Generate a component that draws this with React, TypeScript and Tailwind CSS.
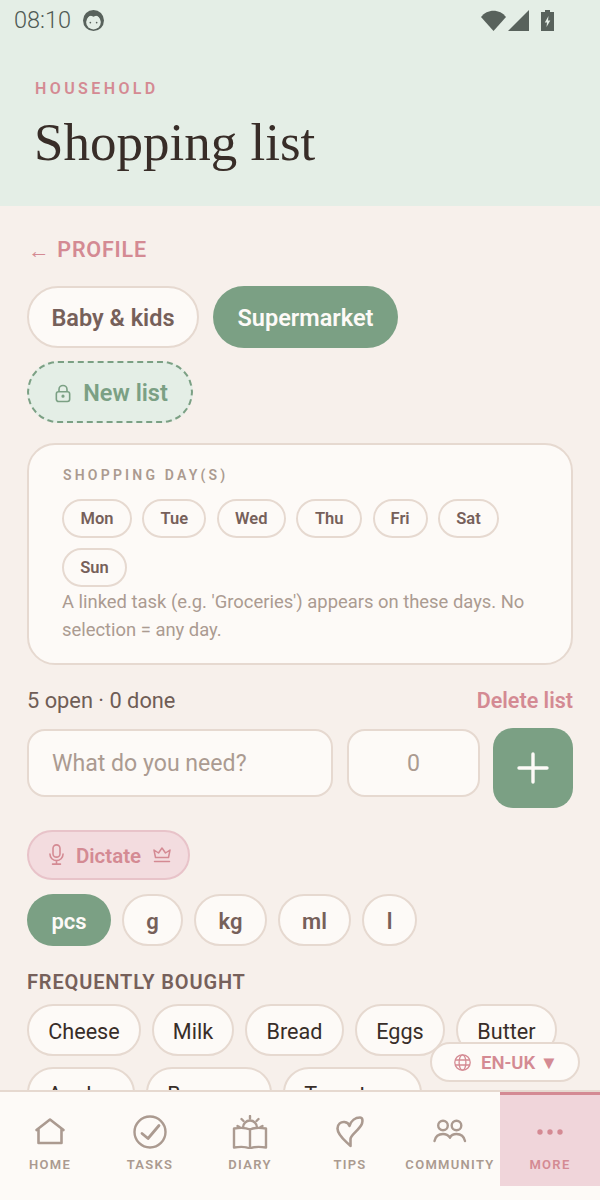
const days = [
  { label: "Mon", w: "w-[70px]" },
  { label: "Tue", w: "w-[64px]" },
  { label: "Wed", w: "w-[69px]" },
  { label: "Thu", w: "w-[66px]" },
  { label: "Fri", w: "w-[55px]" },
  { label: "Sat", w: "w-[61px]" },
  { label: "Sun", w: "w-[65px]" },
];

const units = [
  { label: "g", w: "w-[61px]" },
  { label: "kg", w: "w-[73px]" },
  { label: "ml", w: "w-[73px]" },
  { label: "l", w: "w-[55px]" },
];

const frequent = [
  { label: "Cheese", w: "w-[114px]" },
  { label: "Milk", w: "w-[82px]" },
  { label: "Bread", w: "w-[99px]" },
  { label: "Eggs", w: "w-[90px]" },
  { label: "Butter", w: "w-[101px]" },
  { label: "Apples", w: "w-[108px]" },
  { label: "Bananas", w: "w-[126px]" },
  { label: "Tomatoes", w: "w-[139px]" },
];

const HomeIcon = () => (
  <svg width="34" height="34" viewBox="0 0 34 34" fill="none" stroke="#ab9a90" strokeWidth="2.6" strokeLinejoin="round" strokeLinecap="round">
    <path d="M3.500 15 17 4.500 30.500 15M5.500 14V28H28.500V14" />
  </svg>
);

const TasksIcon = () => (
  <svg width="34" height="34" viewBox="0 0 34 34" fill="none" stroke="#ab9a90" strokeWidth="2.4" strokeLinejoin="round" strokeLinecap="round">
    <circle cx="17" cy="17" r="15.500" />
    <path d="M9 18.500 15 23.500 26 10.500" strokeWidth="2.800" />
  </svg>
);

const DiaryIcon = () => (
  <svg width="36" height="34" viewBox="0 0 36 34" fill="none" stroke="#ab9a90" strokeWidth="2.400" strokeLinejoin="round" strokeLinecap="round">
    <path d="M18 14.500C14.500 12.800 8 12.500 2 13.500V32.500C8 31.500 14.500 31.800 18 33.500 21.500 31.800 28 31.500 34 32.500V13.500C28 12.500 21.500 12.800 18 14.500ZM18 14.500V33.500" />
    <path d="M11 12.500A7 7 0 0 1 25 12.500" />
    <path d="M18 1V3.500M9.500 4 11.500 6M26.500 4 24.500 6M5.500 11 7.500 12M30.500 11 28.500 12" />
  </svg>
);

const TipsIcon = () => (
  <svg width="30" height="34" viewBox="0 0 30 34" fill="none" stroke="#ab9a90" strokeWidth="2.600" strokeLinejoin="round" strokeLinecap="round">
    <path d="M15.500 31C12 27 2.500 21 2.500 13.500 2.500 9 6 6.500 9.500 7 11.800 7.300 13.800 8.500 14.500 11 16 5.500 20.500 2.500 25 2.500 27.500 2.500 28 5.500 27 8.500 24.500 15 15.500 20 15.500 24Z" />
  </svg>
);

const CommunityIcon = () => (
  <svg width="34" height="26" viewBox="0 0 34 26" fill="none" stroke="#ab9a90" strokeWidth="2.400" strokeLinecap="round">
    <circle cx="10" cy="6.500" r="4.800" />
    <circle cx="23.500" cy="6.500" r="4.800" />
    <path d="M1.500 22C2.500 17 6 15 10 15 13.500 15 15.500 16.500 17 18.500" />
    <path d="M17 18.500C18 16.500 20.500 15 23.500 15 27.500 15 31 17.500 32 22" />
  </svg>
);

const MoreIcon = () => (
  <svg width="28" height="8" viewBox="0 0 28 8" fill="#d48a93">
    <circle cx="4" cy="4" r="2.700" />
    <circle cx="14" cy="4" r="2.700" />
    <circle cx="24" cy="4" r="2.700" />
  </svg>
);

const navItems = [
  { label: "HOME", icon: <HomeIcon /> },
  { label: "TASKS", icon: <TasksIcon /> },
  { label: "DIARY", icon: <DiaryIcon /> },
  { label: "TIPS", icon: <TipsIcon /> },
  { label: "COMMUNITY", icon: <CommunityIcon /> },
];

export default function App() {
  return (
    <div className="relative flex h-[1200px] w-[600px] flex-col overflow-hidden bg-[#f7f0eb] font-['Roboto',sans-serif]">
      <header className="h-[206px] shrink-0 bg-[#e4eee6]">
        <div className="flex h-[41px] items-center justify-between pl-[14px] pr-[46px]">
          <div className="flex items-center gap-[12px]">
            <span className="text-[23.500px] font-light leading-none text-[#4f5a54]">08:10</span>
            <svg width="21" height="21" viewBox="0 0 20 20">
              <circle cx="10" cy="10" r="10" fill="#58625c" />
              <circle cx="10" cy="11.500" r="7" fill="#e4eee6" />
              <path d="M3 10C4 5 7 4.500 10 6.500 13 4.500 16 5 17 10V3H3Z" fill="#58625c" />
              <circle cx="7" cy="12" r=".8" fill="#58625c" />
              <circle cx="13" cy="12" r=".8" fill="#58625c" />
            </svg>
          </div>
          <div className="flex items-center gap-[12px]">
            <div className="flex items-center gap-[2px]">
              <svg width="25" height="21" viewBox="0 0 25 21">
                <path d="M0 7C6-1.500 19-1.500 25 7L12.500 21Z" fill="#58625c" />
              </svg>
              <svg width="21" height="21" viewBox="0 0 21 21">
                <path d="M21 0V21H0Z" fill="#58625c" />
              </svg>
            </div>
            <svg width="13" height="21" viewBox="0 0 13 21">
              <path d="M4 0H9V2H13V21H0V2H4Z" fill="#58625c" />
              <path d="M7.500 6 3.800 12.500H6L5.500 17 9.300 10.500H7Z" fill="#e4eee6" />
            </svg>
          </div>
        </div>
        <div className="pl-[35px] pt-[38px]">
          <p className="text-[16px] font-semibold leading-[20px] tracking-[3.400px] text-[#d48a93]">HOUSEHOLD</p>
          <h1 className="-ml-[1px] mt-[13px] font-['Liberation_Serif',serif] text-[53px] leading-[60px] text-[#382d28]">Shopping list</h1>
        </div>
      </header>

      <main className="flex min-h-0 flex-1 flex-col overflow-hidden px-[27px]">
        <div className="mt-[31px] flex h-[26px] items-center text-[21.500px] font-semibold leading-none tracking-[.8px] text-[#d48a93]">
          <span className="ml-[1px] mr-[7px] mt-[3px] font-normal">←</span>
          PROFILE
        </div>

        <div className="mt-[24px] flex flex-wrap gap-x-[14px] gap-y-[13px]">
          <button className="h-[62px] w-[172px] rounded-full border-2 border-[#e6d9d0] bg-[#fdfaf7] pt-[5px] text-[23.500px] font-semibold text-[#76605a]">Baby &amp; kids</button>
          <button className="h-[62px] w-[185px] rounded-full bg-[#7ba084] pt-[5px] text-[23.500px] font-semibold text-[#fdfaf7]">Supermarket</button>
          <button className="flex h-[62px] w-[166px] items-center justify-center gap-[12px] rounded-full border-2 border-dashed border-[#7ba084] bg-[#e4eee6] pl-[3px] pt-[4px] text-[23.500px] font-semibold text-[#7ba084]">
            <svg width="16" height="19" viewBox="0 0 18 20" fill="none" stroke="#7ba084" strokeWidth="1.800">
              <rect x="1.500" y="8" width="15" height="11" rx="2.500" />
              <path d="M4.500 8V5.500A4.500 4.500 0 0 1 13.500 5.500V8" />
              <circle cx="9" cy="13" r=".9" fill="#7ba084" />
            </svg>
            New list
          </button>
        </div>

        <section className="mt-[20px] h-[222px] shrink-0 rounded-[28px] border-2 border-[#e6d9d0] bg-[#fdfaf7] pl-[33px] pr-[28px] pt-[20px]">
          <p className="pl-[1px] text-[14px] font-semibold leading-[20px] tracking-[3.200px] text-[#ab9a90]">SHOPPING DAY(S)</p>
          <div className="mt-[14px] flex flex-wrap gap-x-[10.400px] gap-y-[10px]">
            {days.map((d) => (
              <span key={d.label} className={`flex h-[39px] items-center justify-center rounded-full border-2 border-[#e6d9d0] pt-[2px] text-[16.500px] font-semibold text-[#76605a] ${d.w}`}>
                {d.label}
              </span>
            ))}
          </div>
          <p className="mt-[1px] text-[18.400px] leading-[28px] text-[#ab9b91]">A linked task (e.g. 'Groceries') appears on these days. No selection = any day.</p>
        </section>

        <div className="mt-[22px] flex h-[30px] items-center justify-between">
          <span className="text-[21.800px] text-[#6f5d56]">5 open · 0 done</span>
          <span className="text-[21.500px] font-semibold text-[#d48a93]">Delete list</span>
        </div>

        <div className="mt-[11px] flex items-start">
          <div className="mt-[1px] flex h-[68px] w-[306px] items-center rounded-[18px] border-2 border-[#e6d9d0] bg-[#fdfaf7] pl-[23px] pt-[3px] text-[23.100px] text-[#ab9b91]">What do you need?</div>
          <div className="ml-[14px] mt-[1px] flex h-[68px] w-[133px] items-center justify-center rounded-[18px] border-2 border-[#e6d9d0] bg-[#fdfaf7] pt-[3px] text-[23.100px] text-[#ab9b91]">0</div>
          <button className="ml-[13px] flex h-[80px] w-[80px] items-center justify-center rounded-[20px] bg-[#7ba084]">
            <svg width="32" height="32" viewBox="0 0 32 32" stroke="#fdfaf7" strokeWidth="3.400" strokeLinecap="round">
              <path d="M16 2V30M2 16H30" />
            </svg>
          </button>
        </div>

        <button className="mt-[22px] flex h-[50px] w-[163px] shrink-0 items-center justify-center gap-[12px] rounded-full border-2 border-[#e8c3c9] bg-[#f3dcdf] pl-[3px] text-[20.500px] font-semibold text-[#d48a93]">
          <svg width="15" height="21" viewBox="0 0 17 24" fill="none" stroke="#d48a93" strokeWidth="1.800" strokeLinecap="round">
            <rect x="4.500" y="1" width="8" height="14" rx="4" />
            <path d="M1 11.500A7.500 7.500 0 0 0 16 11.500M8.500 19V23M4 23H13" />
          </svg>
          <span className="pt-[3px]">Dictate</span>
          <svg width="18" height="16" viewBox="0 0 18 16" fill="none" stroke="#d48a93" strokeWidth="1.500" strokeLinejoin="round" strokeLinecap="round">
            <path d="M2.500 10.500 1 3 5.500 6 9 1 12.500 6 17 3 15.500 10.500ZM1.500 14.500H16.500" />
          </svg>
        </button>

        <div className="mt-[14px] flex gap-x-[11px]">
          <span className="flex h-[52px] w-[84px] items-center justify-center rounded-full bg-[#7ba084] pt-[4px] text-[22px] font-semibold text-[#fdfaf7]">pcs</span>
          {units.map((u) => (
            <span key={u.label} className={`flex h-[52px] items-center justify-center rounded-full border-2 border-[#e6d9d0] bg-[#fdfaf7] pt-[4px] text-[22px] font-semibold text-[#76605a] ${u.w}`}>
              {u.label}
            </span>
          ))}
        </div>

        <p className="mt-[24px] text-[20px] font-semibold leading-[24px] tracking-[.85px] text-[#76605a]">FREQUENTLY BOUGHT</p>

        <div className="mt-[10px] flex flex-wrap gap-x-[11px] gap-y-[11px]">
          {frequent.map((f) => (
            <span key={f.label} className={`flex h-[52px] items-center justify-center rounded-full border-2 border-[#e6d9d0] bg-[#fdfaf7] pt-[5px] text-[21.600px] text-[#382d28] ${f.w}`}>
              {f.label}
            </span>
          ))}
        </div>
      </main>

      <div className="absolute right-[20px] top-[1042px] flex h-[40px] w-[150px] items-center justify-center gap-[10px] rounded-full border-2 border-[#e6d9d0] bg-[#fdfaf7] pl-[2px] text-[18.500px] font-semibold text-[#d48a93]">
        <svg width="17" height="17" viewBox="0 0 17 17" fill="none" stroke="#d48a93" strokeWidth="1.300">
          <circle cx="8.500" cy="8.500" r="7.700" />
          <ellipse cx="8.500" cy="8.500" rx="3.400" ry="7.700" />
          <path d="M1 6H16M1 11H16" />
        </svg>
        <span className="pt-[3px]">EN-UK ▼</span>
      </div>

      <nav className="h-[110px] shrink-0 border-t-2 border-[#e6d9d0] bg-[#fdfaf7]">
        <div className="flex h-[94px]">
          {navItems.map((item) => (
            <div key={item.label} className="flex w-[100px] flex-col items-center pt-[22px]">
              <div className="flex h-[36px] items-center justify-center">{item.icon}</div>
              <span className="mt-[7px] text-[13px] font-semibold leading-[16px] tracking-[1.300px] text-[#ab9a90]">{item.label}</span>
            </div>
          ))}
          <div className="flex w-[100px] flex-col items-center border-t-[3px] border-[#d48a93] bg-[#f0d5da] pt-[19px]">
            <div className="flex h-[36px] items-center justify-center"><MoreIcon /></div>
            <span className="mt-[7px] text-[13px] font-semibold leading-[16px] tracking-[1.300px] text-[#d48a93]">MORE</span>
          </div>
        </div>
      </nav>
    </div>
  );
}
